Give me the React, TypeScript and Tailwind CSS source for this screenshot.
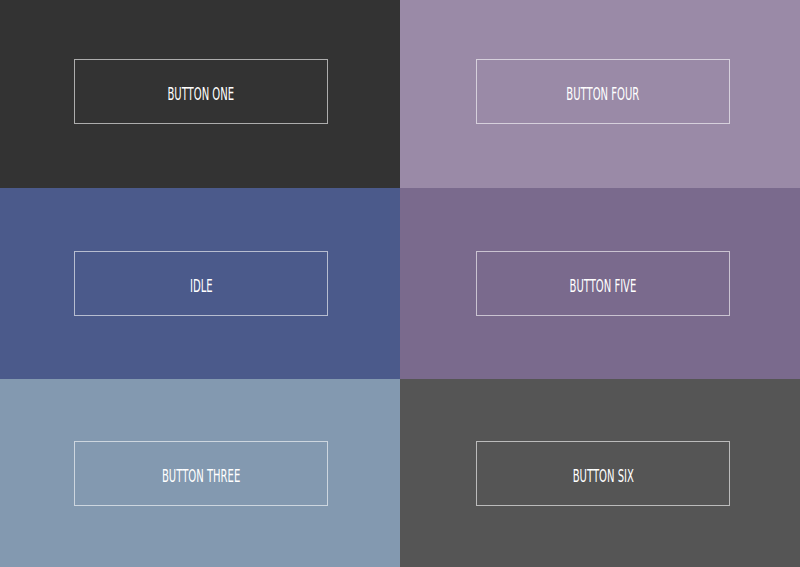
const tiles = [
  { label: "BUTTON ONE", bg: "bg-[#333333]", cell: "pl-[74px] pt-[59px]" },
  { label: "BUTTON FOUR", bg: "bg-[#9a8aa7]", cell: "pl-[76px] pt-[59px]" },
  { label: "IDLE", bg: "bg-[#4b5a8b]", cell: "pl-[74px] pt-[63px]" },
  { label: "BUTTON FIVE", bg: "bg-[#7a6a8d]", cell: "pl-[76px] pt-[63px]" },
  { label: "BUTTON THREE", bg: "bg-[#8399b0]", cell: "pl-[74px] pt-[62px]" },
  { label: "BUTTON SIX", bg: "bg-[#555555]", cell: "pl-[76px] pt-[62px]" },
];

export default function App() {
  return (
    <div className="grid h-[567px] w-[800px] grid-cols-[400px_400px] grid-rows-[188px_191px_188px] overflow-hidden">
      {tiles.map((t) => (
        <div key={t.label} className={`${t.bg} ${t.cell}`}>
          <button
            type="button"
            className="flex h-[65px] w-[254px] items-center justify-center border border-white/60 text-[18px] text-white"
            style={{ fontFamily: '"DejaVu Sans Condensed", "DejaVu Sans", sans-serif', fontStretch: "condensed" }}
          >
            <span className="inline-block scale-x-[0.62] pt-[3px]">{t.label}</span>
          </button>
        </div>
      ))}
    </div>
  );
}
